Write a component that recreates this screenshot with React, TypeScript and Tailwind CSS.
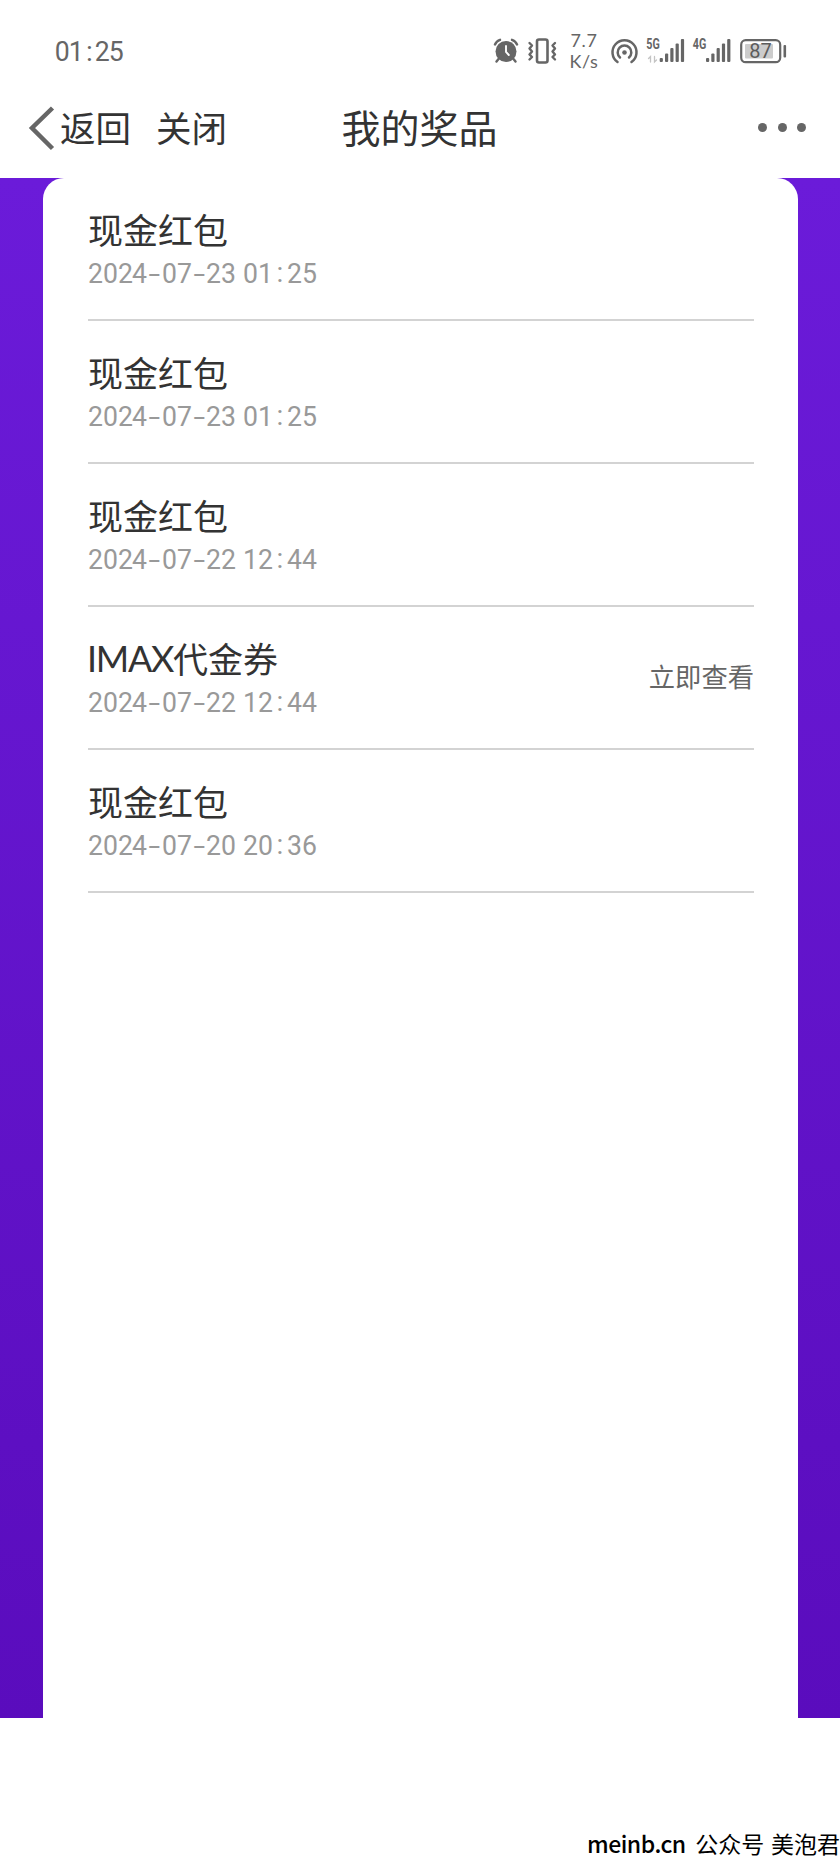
import type { ReactNode } from 'react';

type Prize = { name: string; time: string; action?: string };

const prizes: Prize[] = [
  { name: '现金红包', time: '2024-07-23 01:25' },
  { name: '现金红包', time: '2024-07-23 01:25' },
  { name: '现金红包', time: '2024-07-22 12:44' },
  { name: 'IMAX代金券', time: '2024-07-22 12:44', action: '立即查看' },
  { name: '现金红包', time: '2024-07-20 20:36' },
];

// Every glyph takes one fixed cell, so digits line up from row to row.
function Stamp({ text }: { text: string }) {
  return (
    <span className="flex whitespace-pre">
      {Array.from(text).map((c, i) => (
        <span
          key={i}
          className={
            c === ' '
              ? 'w-[7px]'
              : c === '-'
                ? 'w-[14.8px] scale-x-[1.5] text-center'
                : c === ':'
                  ? 'flex w-[14.8px] -translate-y-px justify-center'
                  : 'flex w-[14.8px] scale-x-[0.95] justify-center'
          }
        >
          {c}
        </span>
      ))}
    </span>
  );
}

function Icon({ box, className, children }: { box: string; className: string; children: ReactNode }) {
  return (
    <svg viewBox={box} className={`h-10 shrink-0 ${className}`} fill="none" stroke="#666" strokeLinecap="round">
      {children}
    </svg>
  );
}

function Bars({ x }: { x: number }) {
  return (
    <g fill="#666" stroke="none">
      <rect x={x} y="58" width="3.2" height="4" rx="1" />
      <rect x={x + 5.3} y="53.5" width="3.2" height="8.5" rx="1" />
      <rect x={x + 10.6} y="48" width="3.2" height="14" rx="1" />
      <rect x={x + 15.9} y="43.5" width="3.2" height="18.5" rx="1" />
      <rect x={x + 21.2} y="39" width="3.2" height="23" rx="1" />
    </g>
  );
}

function StatusBar() {
  return (
    <div className="flex h-[82px] items-start pl-[55px] pr-[50px] pt-[30px] text-[#666]">
      <div className="flex h-[43px] flex-1 items-center font-[Roboto,sans-serif] text-[28px] leading-none">
        {Array.from('01:25').map((c, i) => (
          <span key={i} className={c === ':' ? 'flex w-[11px] justify-center' : 'flex w-[14.4px] scale-x-[0.95] justify-center'}>
            {c}
          </span>
        ))}
      </div>
      <Icon box="490 30 34 40" className="w-[34px]">
        <circle cx="506" cy="51.500" r="10.500" fill="#666" stroke="none" />
        <path d="M495 44.500Q496.500 40.800 500 39.800M517 44.500Q515.500 40.800 512 39.800" strokeWidth="2.400" />
        <path d="M498.500 59L496.500 61.500M513.500 59L515.500 61.500" strokeWidth="2.400" />
        <path d="M506 46V52L508.800 55" stroke="#fff" strokeWidth="1.900" />
      </Icon>
      <Icon box="524 30 38 40" className="w-[38px]">
        <rect x="537" y="39.500" width="10.500" height="23" rx="2" strokeWidth="2.600" />
        <path
          d="M529.500 43L532 45.500L529.500 48.500L532 51.500L529.500 54.500L532 57L529.500 59.500M555 43L552.500 45.500L555 48.500L552.500 51.500L555 54.500L552.500 57L555 59.500"
          strokeWidth="2.400"
          strokeLinejoin="round"
        />
      </Icon>
      <div className="flex w-11 flex-col items-center font-[Lato,sans-serif] text-[18px] leading-[20.500px] tracking-[0.600px]">
        <span>7.7</span>
        <span>K/s</span>
      </div>
      <Icon box="606 30 37 40" className="w-[37px]">
        <circle cx="624.500" cy="52.500" r="2.300" fill="#666" stroke="none" />
        <path d="M617.500 62A12 12 0 1 1 631.500 62" strokeWidth="2.500" />
        <path d="M620 57.500A6.800 6.800 0 1 1 629 57.500" strokeWidth="2.500" />
      </Icon>
      <Icon box="643 30 47 40" className="w-[47px]">
        <text x="646.300" y="49.300" fill="#666" stroke="none" className="font-[Roboto,sans-serif] text-[14.500px] font-bold" textLength="13.500" lengthAdjust="spacingAndGlyphs">
          5G
        </text>
        <path d="M650.500 62V56.500L648.500 58.500M654.500 56.500V62L656.500 60" stroke="#c4c4c4" strokeWidth="1.300" />
        <Bars x={659.7} />
      </Icon>
      <Icon box="690 30 45 40" className="w-[45px]">
        <text x="692.800" y="49.300" fill="#666" stroke="none" className="font-[Roboto,sans-serif] text-[14.500px] font-bold" textLength="13.500" lengthAdjust="spacingAndGlyphs">
          4G
        </text>
        <Bars x={706} />
      </Icon>
      <Icon box="735 30 55 40" className="w-[55px]">
        <rect x="741.200" y="40.200" width="39" height="22" rx="4.500" strokeWidth="2.200" />
        <rect x="745" y="44" width="28" height="14.500" rx="1" fill="#ccc" stroke="none" />
        <rect x="783.500" y="45" width="2.600" height="12.500" rx="1" fill="#666" stroke="none" />
        <text x="760.500" y="58.300" textAnchor="middle" fill="#5c5c5c" stroke="none" className="font-[Roboto,sans-serif] text-[20px] font-normal">
          87
        </text>
      </Icon>
    </div>
  );
}

function NavBar() {
  return (
    <div className="grid h-24 grid-cols-[1fr_auto_1fr] items-center pb-[4px] pl-[28px] pr-[34px] text-[#333]">
      <div className="flex items-center text-[35.500px] leading-none">
        <svg viewBox="0 0 28 46" className="h-[46px] w-7" fill="none" stroke="#666" strokeWidth="4.500">
          <path d="M24.500 3L4 23L24.500 43.500" />
        </svg>
        <span className="mb-[2px] ml-[4px]">返回</span>
        <span className="mb-[2px] ml-[25px]">关闭</span>
      </div>
      <h1 className="mb-[4px] ml-[5px] text-[39px] leading-none">我的奖品</h1>
      <div className="mb-px flex items-center justify-end gap-[10.800px]">
        <i className="size-[8.700px] rounded-full bg-[#666]" />
        <i className="size-[8.700px] rounded-full bg-[#666]" />
        <i className="size-[8.700px] rounded-full bg-[#666]" />
      </div>
    </div>
  );
}

export default function App() {
  return (
    <div className="flex h-[1864px] w-[840px] flex-col overflow-hidden bg-white font-['Noto_Sans_CJK_SC',sans-serif]">
      <StatusBar />
      <NavBar />
      <main className="h-[1540px] bg-linear-to-b from-[#6b1bd9] to-[#5a0cbd] pl-[43px] pr-[42px]">
        <ul className="h-full rounded-t-[21px] bg-white pl-[45px] pr-[44px]">
          {prizes.map((p, i) => (
            <li key={i} className="flex h-[143px] items-center justify-between border-b-2 border-[#d3d3d3]">
              <div>
                <div className="flex items-center text-[35px] leading-[50px] text-[#333]">
                  {p.name.startsWith('IMAX') ? (
                    <>
                      <span className="-ml-px font-[Lato,sans-serif] text-[36px] tracking-[-1.300px]">IMAX</span>
                      <span>{p.name.slice(4)}</span>
                    </>
                  ) : (
                    p.name
                  )}
                </div>
                <div className="font-[Roboto,sans-serif] text-[28px] leading-[40px] text-[#999]">
                  <Stamp text={p.time} />
                </div>
              </div>
              {p.action && <button className="mb-[3px] text-[26.300px] leading-none text-[#666]">{p.action}</button>}
            </li>
          ))}
        </ul>
      </main>
      <footer className="flex flex-1 items-end whitespace-pre pb-[8px] pl-[587px] text-[23px] leading-[26px] text-black">
        <span className="w-[111px] font-medium tracking-[-0.500px]">meinb.cn</span>
        <span className="shrink-0 [word-spacing:1.500px]">公众号 美泡君</span>
      </footer>
    </div>
  );
}
